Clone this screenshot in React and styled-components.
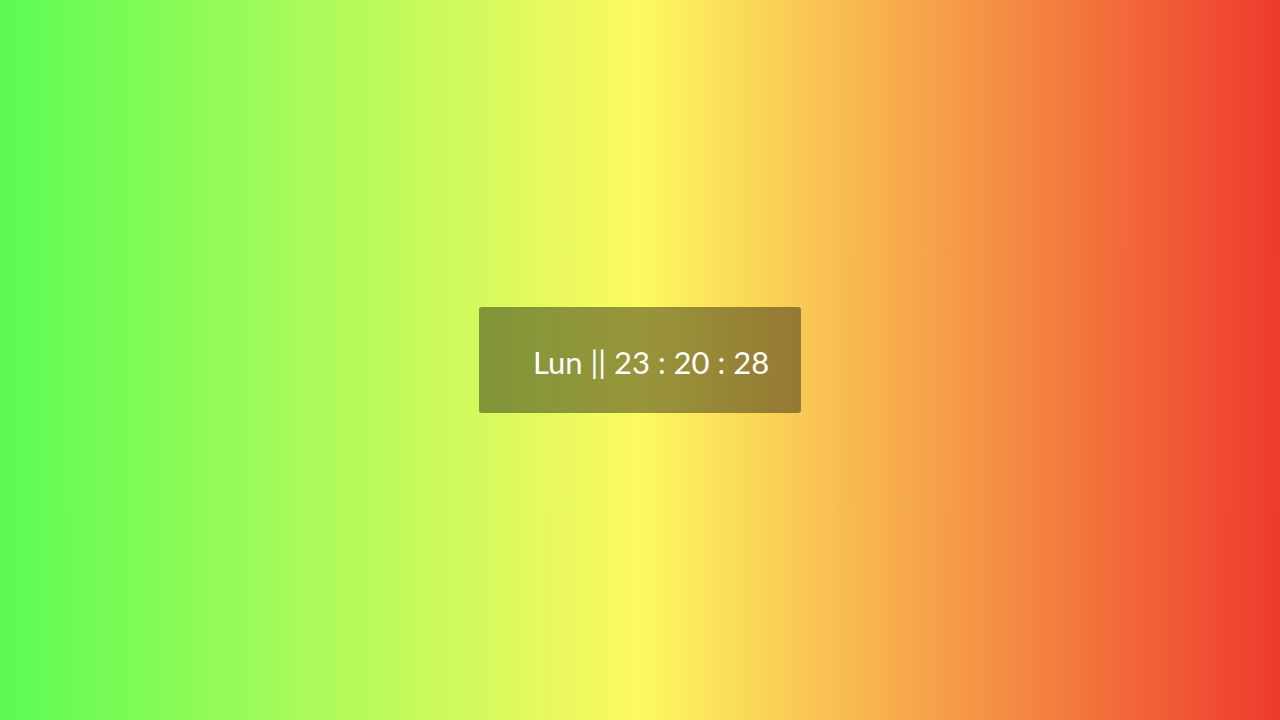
import React from "react";
import styled, { createGlobalStyle } from "styled-components";

const Global = createGlobalStyle`
  html, body { margin: 0; padding: 0; height: 100%; }
  #root { height: 100%; }
`;

const Page = styled.div`
  width: 100vw;
  height: 100vh;
  display: flex;
  align-items: center;
  justify-content: center;
  background: linear-gradient(to right, #5cfb53 0%, #fdf961 50%, #ee3a2d 100%);
  font-family: "Lato", "Noto Sans", sans-serif;
`;

const Clock = styled.div`
  width: 322px;
  height: 106px;
  box-sizing: border-box;
  display: flex;
  align-items: center;
  justify-content: flex-start;
  padding-left: 54px;
  padding-top: 5px;
  background: rgba(0, 0, 0, 0.4);
  border-radius: 3px;
`;

const Time = styled.span`
  color: #ffffff;
  font-size: 31px;
  white-space: nowrap;
  line-height: 1;
`;

export default function App() {
  return (
    <>
      <Global />
      <Page>
        <Clock>
          <Time>Lun || 23 : 20 : 28</Time>
        </Clock>
      </Page>
    </>
  );
}
